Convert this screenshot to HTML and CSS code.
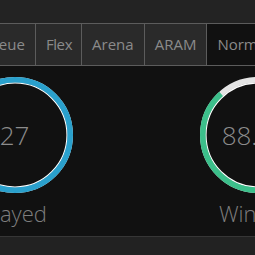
FILE: index.html
```html
<!DOCTYPE html>
<html lang="en">
<head>
  <meta charset="UTF-8" />
  <meta name="viewport" content="width=device-width, initial-scale=1.0"/>
  <title>Stats</title>
  <link rel="stylesheet" href="styles.css">
</head>
<body>
  <div class="top-bar"></div>

  <nav class="queue-tabs">
    <button class="tab">Solo Queue</button>
    <button class="tab flex">Flex</button>
    <button class="tab">Arena</button>
    <button class="tab">ARAM</button>
    <button class="tab active">Normal</button>
  </nav>

  <section class="stats">
    <div class="stat">
      <div class="ring">
        <svg viewBox="0 0 116 116" width="116" height="116">
          <circle class="ring-thin" cx="58" cy="58" r="52.1" />
          <circle class="ring-track" cx="58" cy="58" r="55.2" />
          <circle class="ring-bar blue" cx="58" cy="58" r="55.2" style="stroke-dasharray: 346.8 346.8" />
        </svg>
        <span class="value">27</span>
      </div>
      <div class="label">Played</div>
    </div>

    <div class="stat">
      <div class="ring">
        <svg viewBox="0 0 116 116" width="116" height="116">
          <circle class="ring-thin" cx="58" cy="58" r="52.1" />
          <circle class="ring-track" cx="58" cy="58" r="55.2" />
          <circle class="ring-bar green" cx="58" cy="58" r="55.2" style="stroke-dasharray: 305.9 346.8" />
        </svg>
        <span class="value">88.2%</span>
      </div>
      <div class="label">Winrate</div>
    </div>
  </section>

  <footer class="bottom-bar"></footer>
</body>
</html>
```

FILE: styles.css
```css
html, body {
  overflow: hidden;
}

body {
  font-family: "Open Sans", "Liberation Sans", sans-serif;
  background-color: #111111;
  color: #888888;
  margin: 0;
  width: 255px;
  height: 255px;
}

.top-bar {
  height: 23px;
  background-color: #232323;
}

.queue-tabs {
  display: flex;
  margin-left: -66px;
  width: 400px;
  border-top: 1px solid #5c5c5c;
  border-bottom: 1px solid #5c5c5c;
  background-color: #232323;
}
.queue-tabs .tab {
  flex: none;
  font-family: inherit;
  font-size: 15px;
  line-height: 21px;
  padding: 10px 10px;
  color: #8a8a8a;
  background-color: #2a2a2a;
  border: none;
  border-right: 1px solid #5c5c5c;
}
.queue-tabs .tab.flex {
  padding: 10px 9px 10px 10px;
  letter-spacing: -0.4px;
}
.queue-tabs .tab.active {
  background-color: #111111;
  border-right: none;
}

.stats {
  display: flex;
  margin-left: -107px;
  padding: 11px 0 8px;
}

.stat {
  flex: none;
  width: 243px;
  display: flex;
  flex-direction: column;
  align-items: center;
}

.ring {
  display: grid;
  place-items: center;
  width: 116px;
  height: 116px;
}
.ring svg,
.ring .value {
  grid-area: 1 / 1;
}
.ring svg {
  transform: rotate(-90deg);
}
.ring-thin {
  fill: none;
  stroke: #ffffff;
  stroke-width: 1.4;
}
.ring-track {
  fill: none;
  stroke: #e4e4e4;
  stroke-width: 5.6;
}
.ring-bar {
  fill: none;
  stroke-width: 5.6;
}
.ring-bar.blue {
  stroke: #2aa0cc;
}
.ring-bar.green {
  stroke: #3cbf8b;
}

.value {
  font-size: 26px;
  font-weight: 300;
  color: #8c8c8c;
}

.label {
  margin-top: 5px;
  font-size: 22px;
  font-weight: 300;
  line-height: 30px;
  color: #7e7e7e;
}

.bottom-bar {
  height: 40px;
  border-top: 1px solid #363636;
  background-color: #222222;
}
```
